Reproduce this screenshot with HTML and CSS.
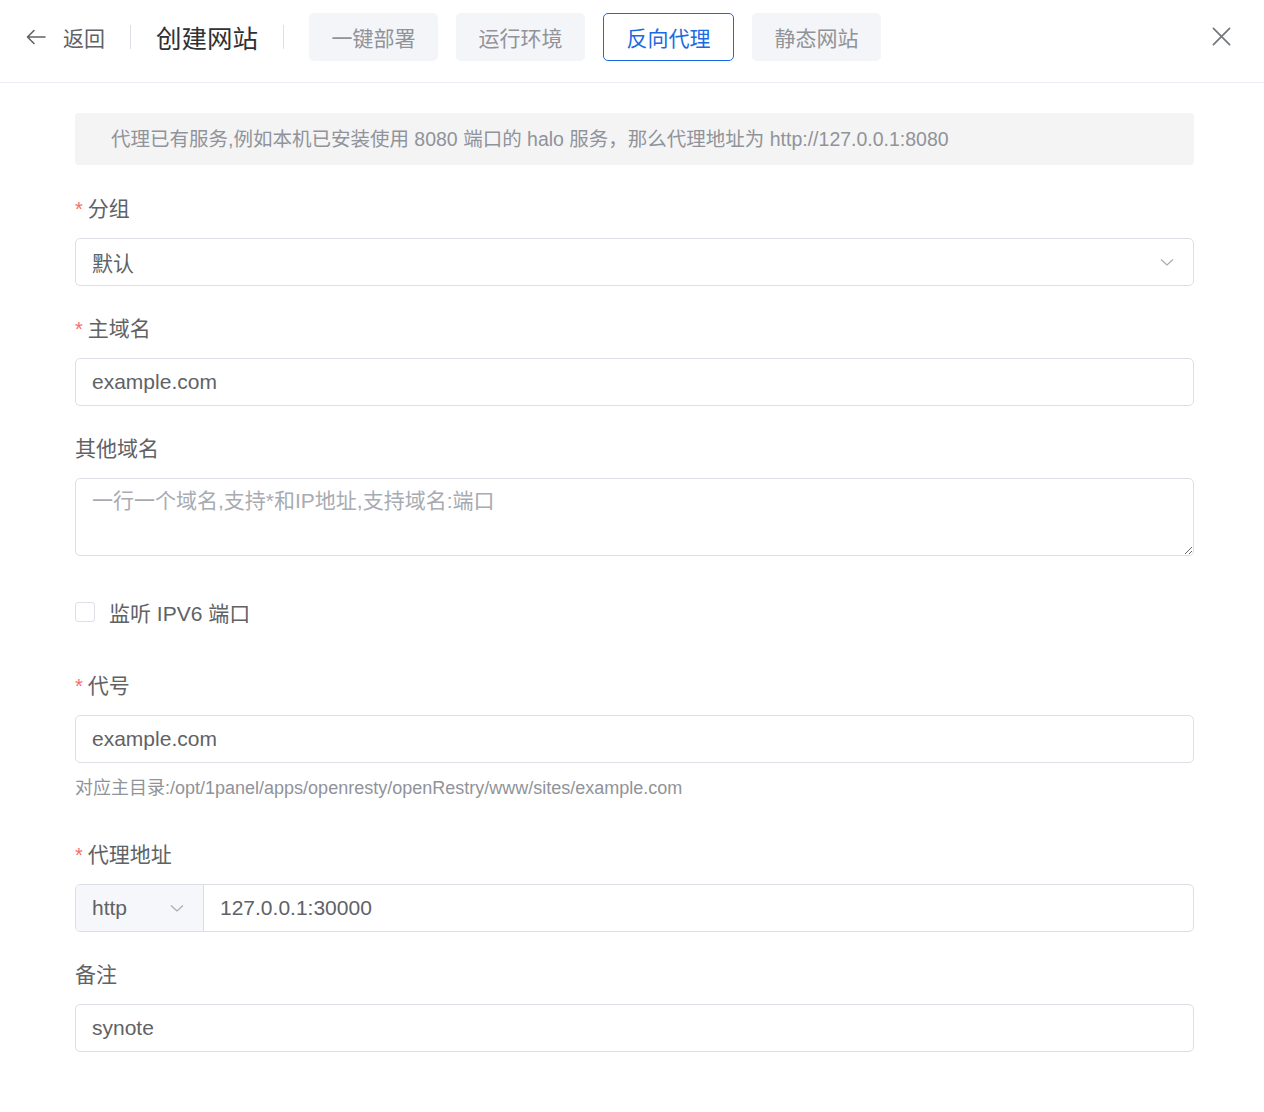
FILE: index.html
```html
<!DOCTYPE html>
<html lang="zh-CN">
<head>
<meta charset="utf-8">
<title>创建网站</title>
<link rel="stylesheet" href="styles.css">
</head>
<body>
<header class="topbar">
  <div class="back">
    <svg class="back-icon" viewBox="0 0 20 20" width="20" height="20"><path d="M19 10H1.5M8 3.5L1.5 10L8 16.5" fill="none" stroke="#606266" stroke-width="1.6" stroke-linecap="round" stroke-linejoin="round"/></svg>
    <span>返回</span>
  </div>
  <span class="sep"></span>
  <span class="title">创建网站</span>
  <span class="sep"></span>
  <div class="tabs">
    <button class="tab">一键部署</button>
    <button class="tab">运行环境</button>
    <button class="tab active">反向代理</button>
    <button class="tab">静态网站</button>
  </div>
  <button class="close" aria-label="close">
    <svg viewBox="0 0 20 20" width="20" height="20"><path d="M1.5 1.5L18.5 18.5M18.5 1.5L1.5 18.5" stroke="#73767a" stroke-width="1.8" stroke-linecap="round"/></svg>
  </button>
</header>

<main class="content">
  <div class="alert">代理已有服务,例如本机已安装使用 8080 端口的 halo 服务，那么代理地址为 http://127.0.0.1:8080</div>

  <div class="item">
    <label class="label"><span class="req">*</span>分组</label>
    <div class="field select">
      <span class="value">默认</span>
      <svg class="chev" viewBox="0 0 16 16" width="16" height="16"><path d="M2 5.5L8 11L14 5.5" fill="none" stroke="#a8abb2" stroke-width="1.2"/></svg>
    </div>
  </div>

  <div class="item">
    <label class="label"><span class="req">*</span>主域名</label>
    <div class="field"><span class="value">example.com</span></div>
  </div>

  <div class="item">
    <label class="label">其他域名</label>
    <textarea class="textarea" placeholder="一行一个域名,支持*和IP地址,支持域名:端口"></textarea>
  </div>

  <div class="check-row">
    <span class="checkbox"></span>
    <span class="check-label">监听 IPV6 端口</span>
  </div>

  <div class="item item-help">
    <label class="label"><span class="req">*</span>代号</label>
    <div class="field"><span class="value">example.com</span></div>
    <div class="help">对应主目录:/opt/1panel/apps/openresty/openRestry/www/sites/example.com</div>
  </div>

  <div class="item">
    <label class="label"><span class="req">*</span>代理地址</label>
    <div class="field group">
      <div class="prepend">
        <span class="value">http</span>
        <svg class="chev" viewBox="0 0 16 16" width="16" height="16"><path d="M2 5.5L8 11L14 5.5" fill="none" stroke="#a8abb2" stroke-width="1.2"/></svg>
      </div>
      <div class="group-input"><span class="value">127.0.0.1:30000</span></div>
    </div>
  </div>

  <div class="item">
    <label class="label">备注</label>
    <div class="field"><span class="value">synote</span></div>
  </div>
</main>
</body>
</html>
```

FILE: styles.css
```css
* { box-sizing: border-box; }

html, body {
  margin: 0;
  background: #ffffff;
  font-family: "Liberation Sans", "Noto Sans CJK SC", sans-serif;
  color: #606266;
}

.topbar {
  display: flex;
  align-items: center;
  height: 83px;
  padding: 0 33px 9px 26px;
  border-bottom: 1px solid #ebeef5;
}

.back {
  display: flex;
  align-items: center;
  gap: 17px;
  font-size: 21px;
  color: #606266;
}

.back-icon { display: block; }

.sep {
  width: 1px;
  height: 24px;
  background: #dcdfe6;
  margin: 0 25px;
}

.title {
  font-size: 25.5px;
  color: #303133;
}

.tabs {
  display: flex;
  gap: 18px;
}

.tab {
  height: 48px;
  padding: 0 21.5px;
  border: 1px solid transparent;
  border-radius: 5px;
  background: #f4f5f8;
  color: #909399;
  font-family: "Liberation Sans", "Noto Sans CJK SC", sans-serif;
  font-size: 21px;
}

.tab.active {
  background: #ffffff;
  border-color: #1a6ae2;
  color: #1a6ae2;
  padding: 0 22.5px;
}

.close {
  margin-left: auto;
  border: 0;
  background: transparent;
  padding: 0;
  display: flex;
}

.close svg { width: 19px; height: 19px; }

.content {
  padding: 30px 70px 40px 75px;
}

.alert {
  height: 52px;
  display: flex;
  align-items: center;
  padding: 0 36px 3px;
  background: #f4f4f5;
  border-radius: 4px;
  color: #909399;
  font-size: 19.5px;
  margin-bottom: 24px;
}

.item {
  margin-bottom: 23px;
}

.label {
  display: block;
  height: 40px;
  line-height: 40px;
  margin-bottom: 9px;
  font-size: 21px;
  color: #606266;
}

.req {
  color: #f56c6c;
  margin-right: 5px;
  font-size: 20px;
}

.field {
  height: 48px;
  display: flex;
  align-items: center;
  padding: 0 16px;
  border: 1px solid #dcdfe6;
  border-radius: 5px;
  font-size: 21px;
  color: #606266;
  background: #ffffff;
}

.select { justify-content: space-between; padding-right: 18px; }

.chev { display: block; }

.textarea {
  display: block;
  width: 100%;
  height: 78px;
  padding: 5px 16px;
  border: 1px solid #dcdfe6;
  border-radius: 5px;
  font-family: "Liberation Sans", "Noto Sans CJK SC", sans-serif;
  font-size: 21px;
  color: #606266;
  resize: vertical;
  outline: none;
}

.textarea::placeholder { color: #a8abb2; }

.check-row {
  display: flex;
  align-items: center;
  height: 40px;
  margin-top: 36px;
  margin-bottom: 34px;
}

.checkbox {
  width: 20px;
  height: 20px;
  border: 1px solid #dcdfe6;
  border-radius: 3px;
  margin-right: 14px;
}

.check-label {
  font-size: 21px;
  color: #606266;
}

.item-help { margin-bottom: 35px; }

.help {
  margin-top: 13px;
  line-height: 24px;
  font-size: 18px;
  color: #909399;
}

.group { padding: 0; overflow: hidden; }

.prepend {
  width: 128px;
  height: 100%;
  display: flex;
  align-items: center;
  justify-content: space-between;
  padding: 0 18px 0 16px;
  background: #f5f7fa;
  border-right: 1px solid #dcdfe6;
}

.group-input {
  flex: 1;
  padding: 0 16px;
}
```
